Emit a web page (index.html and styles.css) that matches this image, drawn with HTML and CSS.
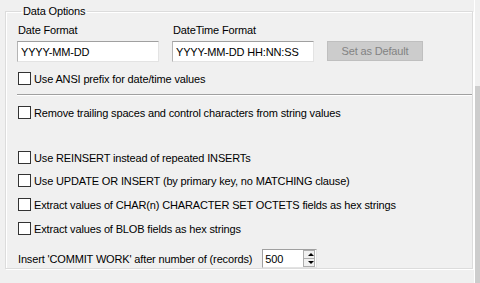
FILE: index.html
```html
<!DOCTYPE html>
<html lang="en">
<head>
    <meta charset="UTF-8">
    <title>Data Options</title>
    <link rel="stylesheet" href="styles.css">
</head>
<body>
    <div class="panel">
        <fieldset class="group">
            <legend>Data Options</legend>
            <div class="formats">
                <div class="field">
                    <label for="date_format">Date Format</label>
                    <input type="text" id="date_format" class="edit" value="YYYY-MM-DD">
                </div>
                <div class="field">
                    <label for="datetime_format">DateTime Format</label>
                    <input type="text" id="datetime_format" class="edit" value="YYYY-MM-DD HH:NN:SS">
                </div>
                <button class="button" disabled>Set as Default</button>
            </div>
            <label class="check ansi"><span class="box"></span>Use ANSI prefix for date/time values</label>
            <div class="separator"></div>
            <label class="check trim"><span class="box"></span>Remove trailing spaces and control characters from string values</label>
            <div class="options">
                <label class="check"><span class="box"></span>Use REINSERT instead of repeated INSERTs</label>
                <label class="check"><span class="box"></span>Use UPDATE OR INSERT (by primary key, no MATCHING clause)</label>
                <label class="check"><span class="box"></span>Extract values of CHAR(n) CHARACTER SET OCTETS fields as hex strings</label>
                <label class="check"><span class="box"></span>Extract values of BLOB fields as hex strings</label>
            </div>
            <div class="commit">
                <span>Insert 'COMMIT WORK' after number of (records)</span>
                <div class="spin">
                    <input type="text" class="spin-value" value="500">
                    <div class="spin-arrows">
                        <span class="arrow up"></span>
                        <span class="arrow down"></span>
                    </div>
                </div>
            </div>
        </fieldset>
        <div class="scrollbar"><div class="thumb"></div></div>
    </div>
</body>
</html>
```

FILE: styles.css
```css
body {
    margin: 0;
    padding: 0;
    background-color: #f0f0f0;
    font-family: "Liberation Sans", Arial, sans-serif;
    font-size: 11px;
    letter-spacing: -0.15px;
    color: #000;
}
.panel {
    display: flex;
    height: 283px;
    overflow: hidden;
}
.group {
    flex: 1;
    margin: 4px 0 0 5px;
    padding: 0 0 0 11px;
    height: 263px;
    border: 1px solid #dcdcdc;
    box-shadow: 1px 1px 0 #fff inset, 1px 1px 0 #fff;
}
.group legend {
    margin-left: 4px;
    padding: 1px 2px 0 2px;
    line-height: 13px;
}
.formats {
    display: flex;
    align-items: flex-end;
    margin-top: 6px;
}
.field {
    display: flex;
    flex-direction: column;
    margin-right: 13px;
}
.field label {
    line-height: 13px;
    margin-left: 1px;
    margin-bottom: 4px;
}
.edit {
    width: 142px;
    height: 21px;
    box-sizing: border-box;
    margin: 0;
    padding: 0 3px;
    border: 1px solid #e3e3e3;
    border-top-color: #a0a0a0;
    border-left-color: #b4b4b4;
    background: #fff;
    font-family: inherit;
    font-size: 11px;
    letter-spacing: inherit;
    color: #000;
    outline: none;
}
.button {
    width: 96px;
    height: 20px;
    margin: 0 0 1px 0;
    padding: 0;
    background: #cccccc;
    border: 1px solid #bfbfbf;
    font-family: inherit;
    font-size: 11px;
    letter-spacing: inherit;
    color: #838383;
}
.check {
    display: flex;
    align-items: center;
    height: 13px;
    margin-left: 1px;
}
.box {
    width: 11px;
    height: 11px;
    border: 1px solid #333;
    background: #fff;
    margin-right: 3px;
    flex-shrink: 0;
}
.ansi {
    margin-top: 10px;
}
.separator {
    height: 1px;
    margin: 9px 0 0 0;
    background: #a0a0a0;
    border-bottom: 1px solid #fff;
}
.trim {
    margin-top: 10px;
}
.options {
    display: flex;
    flex-direction: column;
    gap: 10px;
    margin-top: 32px;
}
.options .check:nth-child(n+3) {
    margin-top: 1px;
}
.commit {
    display: flex;
    align-items: center;
    margin-top: 14px;
    margin-left: 1px;
}
.spin {
    display: flex;
    align-items: center;
    margin-left: 10px;
    width: 55px;
    height: 19px;
    box-sizing: border-box;
    border: 1px solid #a0a0a0;
    border-right-color: #e3e3e3;
    border-bottom-color: #e3e3e3;
    background: #fff;
}
.spin-value {
    width: 36px;
    border: none;
    padding: 0 2px;
    margin: 0;
    font-family: inherit;
    font-size: 11px;
    letter-spacing: inherit;
    outline: none;
    background: transparent;
}
.spin-arrows {
    display: flex;
    flex-direction: column;
    width: 14px;
    height: 17px;
    margin-left: auto;
    margin-right: 1px;
}
.arrow {
    flex: 1;
    background: #f0f0f0;
    border: 1px solid #adadad;
    position: relative;
}
.arrow.up {
    border-bottom: none;
}
.arrow::after {
    content: "";
    position: absolute;
    left: 4px;
    top: 2px;
    border-left: 3px solid transparent;
    border-right: 3px solid transparent;
}
.arrow.up::after {
    border-bottom: 3px solid #000;
}
.arrow.down::after {
    border-top: 3px solid #000;
}
.scrollbar {
    width: 5px;
    margin-left: 1px;
    border-left: 1px solid #fff;
    display: flex;
    flex-direction: column;
    justify-content: flex-end;
}
.thumb {
    height: 197px;
    background: #cdcdcd;
}
```
